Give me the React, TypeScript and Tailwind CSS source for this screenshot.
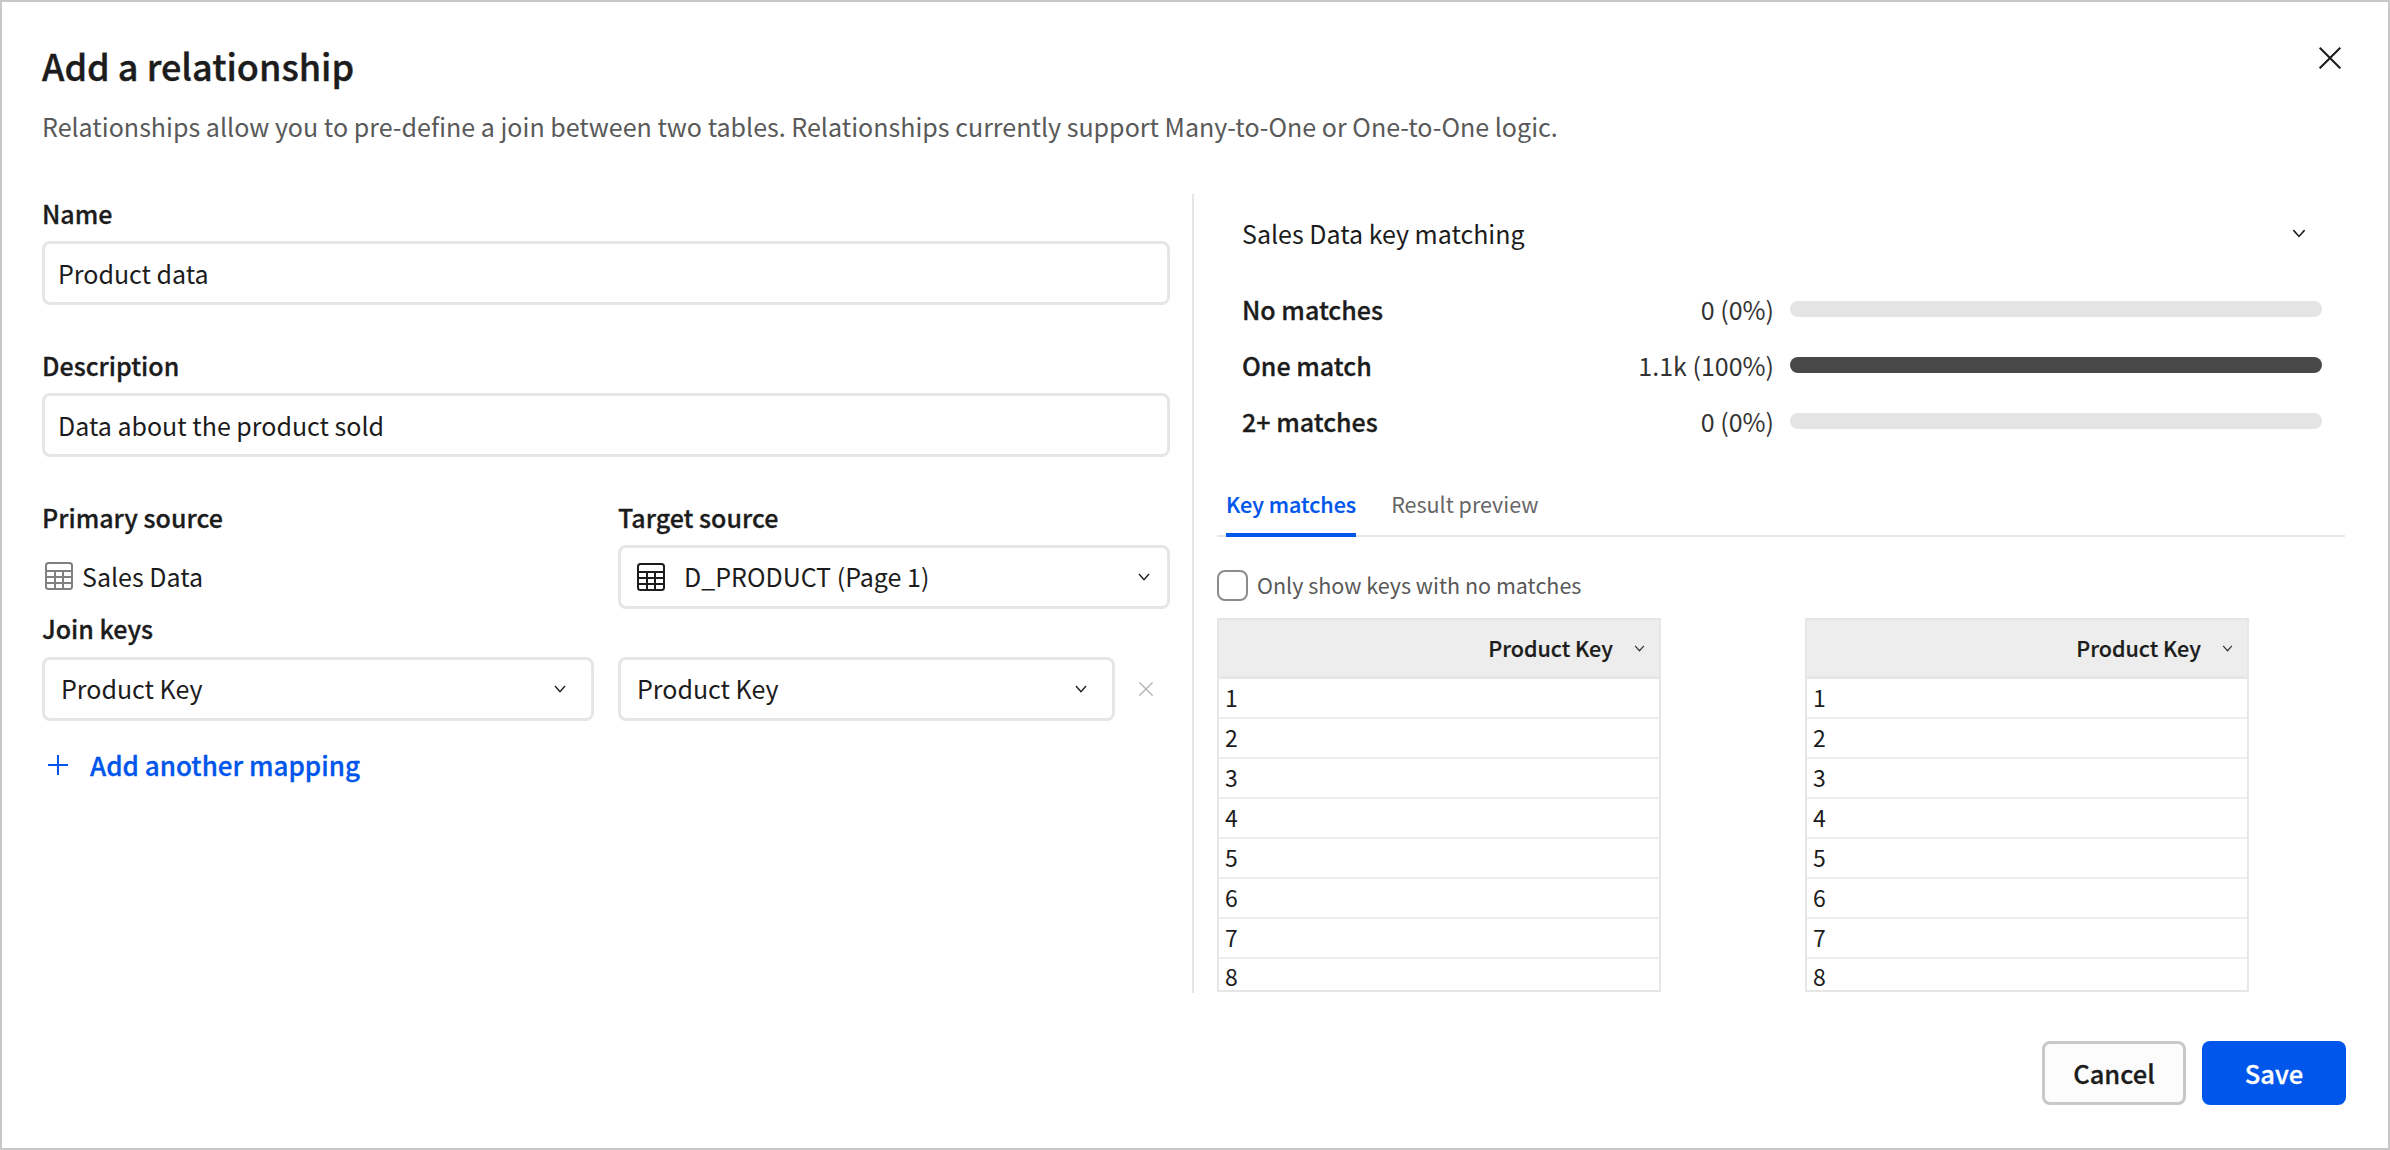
const FONT = "font-['Noto_Sans_CJK_SC','Noto_Sans_CJK_JP',sans-serif]";

const rows = [1, 2, 3, 4, 5, 6, 7, 8];

const matches = [
  { label: 'No matches', value: '0 (0%)', fill: false },
  { label: 'One match', value: '1.1k (100%)', fill: true },
  { label: '2+ matches', value: '0 (0%)', fill: false },
];

const Chevron = ({ className }: { className: string }) => (
  <svg viewBox="0 0 12 8" fill="none" stroke="currentColor" strokeWidth="1.4" className={className}>
    <path d="M1 1 6 6.6 11 1" />
  </svg>
);

const Cross = ({ className }: { className: string }) => (
  <svg viewBox="0 0 16 16" fill="none" stroke="currentColor" strokeWidth="1.5" className={className}>
    <path d="M.5.5l15 15M15.5.5l-15 15" />
  </svg>
);

const TableIcon = ({ className }: { className: string }) => (
  <svg viewBox="0 0 28 28" fill="none" stroke="currentColor" strokeWidth="2" className={className}>
    <rect x="1" y="1" width="26" height="26" rx="2.5" />
    <path d="M1 9h26M1 15h26M1 21h26M10 9v18M18 9v18" />
  </svg>
);

const Select = ({ text, width, pad, icon }: { text: string; width: string; pad: string; icon?: boolean }) => (
  <div className={`flex h-[64px] items-center justify-between rounded-[8px] border-[3px] border-[#e6e6e6] pl-[16px] ${pad} ${width}`}>
    <div className="flex items-center">
      {icon && <TableIcon className="mr-[19px] h-[28px] w-[28px] text-[#1c1c1c]" />}
      <span className="-mt-[1px] text-[25px] leading-none text-[#1c1c1c]">{text}</span>
    </div>
    <Chevron className="h-[8px] w-[12px] text-[#1c1c1c]" />
  </div>
);

const TextInput = ({ value }: { value: string }) => (
  <div className="flex h-[64px] w-full items-center rounded-[8px] border-[3px] border-[#e6e6e6] pl-[13px]">
    <span className="text-[25px] leading-none text-[#1c1c1c]">{value}</span>
  </div>
);

const Label = ({ children }: { children: string }) => (
  <div className="text-[25px] font-medium leading-[34px] text-[#1c1c1c] [-webkit-text-stroke:0.3px]">{children}</div>
);

const KeyTable = () => (
  <div className="h-[374px] w-[444px] border-[2px] border-[#e6e6e6]">
    <div className="flex h-[59px] items-center justify-end border-b-[3px] border-[#e6e6e6] bg-[#ededed] pr-[14px]">
      <span className="mr-[21px] text-[21.5px] font-medium leading-none text-[#1c1c1c] [-webkit-text-stroke:0.2px]">Product Key</span>
      <Chevron className="h-[7px] w-[11px] text-[#333333]" />
    </div>
    {rows.map((n) => (
      <div
        key={n}
        className={n === 8
          ? 'flex h-[31px] items-start pl-[6px] pt-[6px] text-[23px] leading-none text-[#1c1c1c]'
          : 'flex h-[40px] items-center border-b-[2px] border-[#ededed] pb-[2px] pl-[6px] text-[23px] leading-none text-[#1c1c1c]'}
      >
        {n}
      </div>
    ))}
  </div>
);

export default function App() {
  return (
    <div className={`${FONT} flex h-[1150px] w-[2390px] flex-col border-[2px] border-[#c8c8c8] bg-white`}>
      <div className="flex items-start justify-between pl-[40px] pr-[47px] pt-[40px]">
        <div>
          <h1 className="text-[36px] font-medium leading-[46px] text-[#1c1c1c] [-webkit-text-stroke:0.4px]">Add a relationship</h1>
          <p className="mt-[21px] text-[25.05px] leading-[34px] text-[#595959]">
            Relationships allow you to pre-define a join between two tables. Relationships currently support Many-to-One or One-to-One logic.
          </p>
        </div>
        <Cross className="mt-[5px] h-[22px] w-[22px] text-[#1c1c1c]" />
      </div>

      <div className="mt-[49px] flex pl-[40px]">
        <div className="w-[1128px] pt-[4px]">
          <Label>Name</Label>
          <div className="mt-[11px]"><TextInput value="Product data" /></div>
          <div className="mt-[43px]"><Label>Description</Label></div>
          <div className="mt-[11px]"><TextInput value="Data about the product sold" /></div>
          <div className="mt-[43px] flex gap-[25px]">
            <div className="w-[551px]">
              <Label>Primary source</Label>
              <div className="mt-[28px] flex items-center pl-[3px]">
                <TableIcon className="mr-[9px] h-[28px] w-[28px] text-[#808080]" />
                <span className="text-[25px] leading-none text-[#1c1c1c]">Sales Data</span>
              </div>
            </div>
            <div className="w-[552px]">
              <Label>Target source</Label>
              <div className="mt-[11px]"><Select text="D_PRODUCT (Page 1)" width="w-full" pad="pr-[17px]" icon /></div>
            </div>
          </div>
          <div className="mt-[2px]"><Label>Join keys</Label></div>
          <div className="mt-[12px] flex items-center">
            <Select text="Product Key" width="w-[552px]" pad="pr-[25px]" />
            <div className="ml-[24px]"><Select text="Product Key" width="w-[497px]" pad="pr-[25px]" /></div>
            <Cross className="ml-[24px] h-[14px] w-[14px] text-[#b0b0b0]" />
          </div>
          <div className="mt-[27px] flex items-center pl-[6px] text-[#0055eb]">
            <svg viewBox="0 0 20 20" fill="none" stroke="currentColor" strokeWidth="2" className="h-[20px] w-[20px]">
              <path d="M10 0v20M0 10h20" />
            </svg>
            <span className="ml-[22px] text-[26px] font-medium leading-[34px] [-webkit-text-stroke:0.3px]">Add another mapping</span>
          </div>
        </div>

        <div className="ml-[22px] mt-[2px] h-[799px] w-[2px] bg-[#e6e6e6]" />

        <div className="pl-[23px]">
          <div className="flex w-[1128px] items-center justify-between pl-[25px] pr-[39px] pt-[24px]">
            <span className="text-[25px] leading-[34px] text-[#1c1c1c]">Sales Data key matching</span>
            <Chevron className="h-[9px] w-[14px] text-[#1c1c1c]" />
          </div>
          <div className="mt-[42px] flex flex-col gap-[22px] pl-[25px]">
            {matches.map((m) => (
              <div key={m.label} className="flex h-[34px] items-center">
                <span className="w-[239px] text-[25px] font-medium leading-[34px] text-[#1c1c1c] [-webkit-text-stroke:0.3px]">{m.label}</span>
                <span className="w-[293px] text-right text-[25px] leading-[34px] text-[#333333]">{m.value}</span>
                <div className={`ml-[16px] h-[16px] w-[532px] rounded-full ${m.fill ? 'bg-[#484848]' : 'bg-[#e4e4e4]'}`} />
              </div>
            ))}
          </div>
          <div className="mt-[51px] flex h-[48px] w-[1128px] gap-[35px] border-b-[2px] border-[#e6e6e6] pl-[9px]">
            <div className="-mb-[2px] h-[48px] border-b-[4px] border-[#0055eb] text-[21.5px] font-medium leading-[30px] text-[#0055eb] [-webkit-text-stroke:0.2px]">Key matches</div>
            <div className="text-[21.5px] leading-[30px] text-[#666666]">Result preview</div>
          </div>
          <div className="mt-[32px] flex items-center">
            <div className="h-[31px] w-[31px] rounded-[8px] border-[2px] border-[#8c8c8c]" />
            <span className="ml-[9px] text-[21.5px] leading-[32px] text-[#595959]">Only show keys with no matches</span>
          </div>
          <div className="mt-[17px] flex gap-[144px]">
            <KeyTable />
            <KeyTable />
          </div>
        </div>
      </div>

      <div className="mt-[48px] flex justify-end gap-[16px] pr-[42px]">
        <div className="flex h-[64px] w-[144px] items-center justify-center rounded-[8px] border-[3px] border-[#c8c8c8] bg-[#fcfcfc] text-[25.5px] font-medium text-[#1c1c1c] [-webkit-text-stroke:0.3px]">Cancel</div>
        <div className="flex h-[64px] w-[144px] items-center justify-center rounded-[8px] bg-[#0055eb] text-[25.5px] font-medium text-white [-webkit-text-stroke:0.3px]">Save</div>
      </div>
    </div>
  );
}
